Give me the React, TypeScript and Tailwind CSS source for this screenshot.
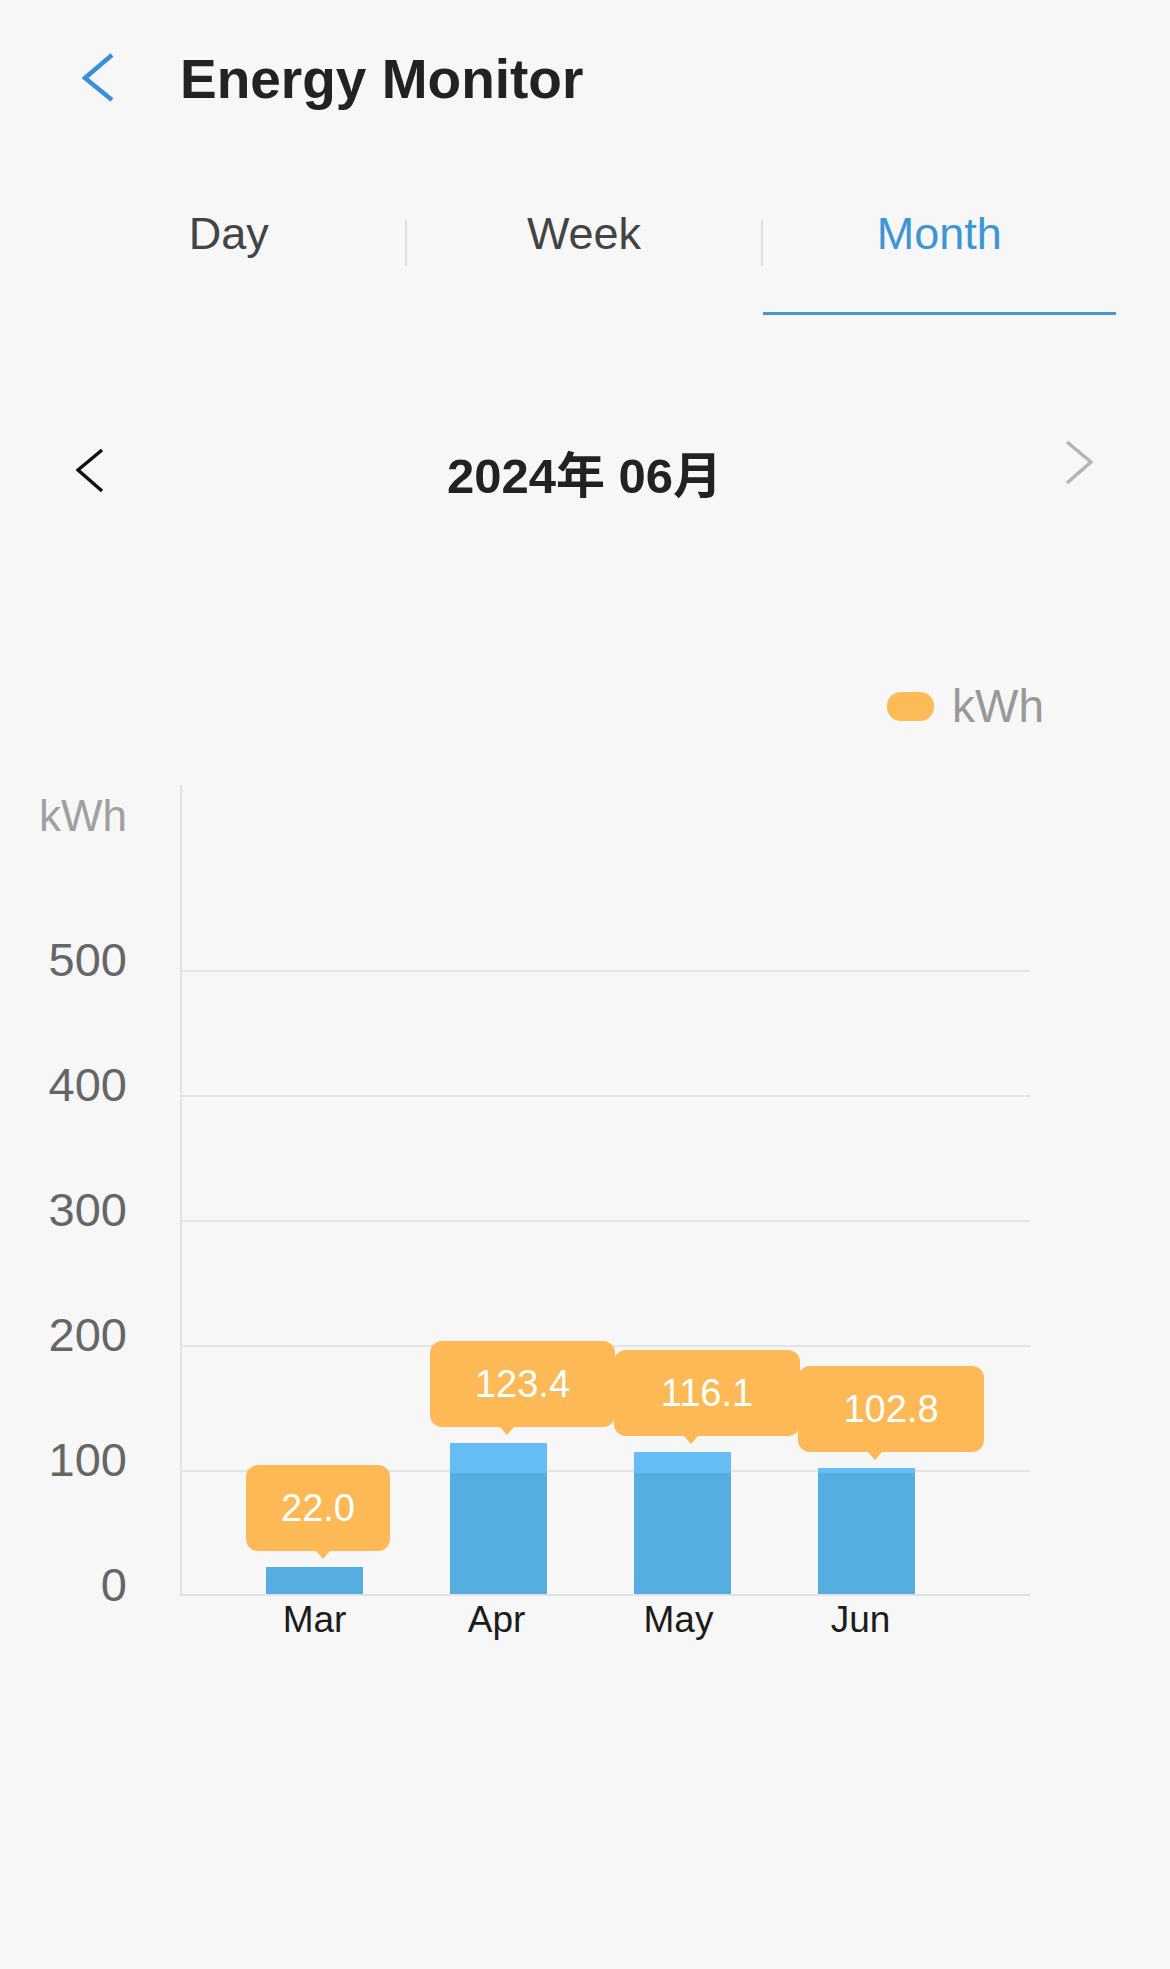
import React from 'react';

const BARS = [
  { label: 'Mar', value: 22.0, tip: 'w-[144px]' },
  { label: 'Apr', value: 123.4, tip: 'w-[185px]' },
  { label: 'May', value: 116.1, tip: 'w-[186px]' },
  { label: 'Jun', value: 102.8, tip: 'w-[186px]' },
];

const Y_TICKS = ['500', '400', '300', '200', '100', '0'];
const GRID_TOPS = ['top-[185px]', 'top-[310px]', 'top-[435px]', 'top-[560px]', 'top-[685px]'];

// pixels per kWh on the plot
const SCALE = 1.225;
// everything above this height (px from baseline) is drawn lighter
const LIGHT_FROM = 121;

const Tabs: React.FC = () => {
  const tabs = ['Day', 'Week', 'Month'];
  return (
    <div className="ml-[52px] mt-[104px] flex w-[1064px] items-start">
      {tabs.map((t, i) => (
        <React.Fragment key={t}>
          {i > 0 && <div className="mt-[9px] h-[46px] w-[2px] bg-[#dedede]" />}
          <div className="flex flex-1 flex-col items-center">
            <span
              className={
                t === 'Month'
                  ? 'text-[45px] leading-none text-[#3d95d6]'
                  : 'text-[45px] leading-none text-[#444444]'
              }
            >
              {t}
            </span>
            <div
              className={
                t === 'Month' ? 'mt-[56px] h-[3px] w-full bg-[#4795c9]' : 'mt-[56px] h-[3px] w-full'
              }
            />
          </div>
        </React.Fragment>
      ))}
    </div>
  );
};

const Chart: React.FC = () => {
  return (
    <div className="mt-[56px] flex">
      <div className="flex w-[127px] flex-col items-end">
        <span className="mt-[9px] text-[44px] leading-none text-[#a0a0a0]">kWh</span>
        <div className="mt-[98px] flex flex-col items-end gap-[78px]">
          {Y_TICKS.map((t) => (
            <span key={t} className="text-[47px] leading-none text-[#666666]">
              {t}
            </span>
          ))}
        </div>
      </div>

      <div className="ml-[53px] flex flex-col">
        <div className="relative flex h-[811px] w-[850px] items-end gap-[87px] border-b-2 border-l-2 border-[#e2e2e2] pl-[84px]">
          {GRID_TOPS.map((g) => (
            <div key={g} className={`absolute left-0 right-0 h-[2px] bg-[#e4e4e4] ${g}`} />
          ))}

          {BARS.map((b) => {
            const h = b.value * SCALE;
            const light = Math.max(0, h - LIGHT_FROM);
            return (
              <div
                key={b.label}
                className="relative flex w-[97px] flex-col bg-[#56ade2]"
                style={{ height: h }}
              >
                <div className="w-full bg-[#65bdf4]" style={{ height: light }} />
                <div
                  className={`absolute bottom-full left-[-20px] mb-[16px] flex h-[86px] items-center justify-center rounded-[12px] bg-[#fcb955] ${b.tip}`}
                >
                  <span className="text-[38px] leading-none text-white">{b.value.toFixed(1)}</span>
                  <div className="absolute left-[70px] top-full h-0 w-0 border-x-[7px] border-t-[8px] border-x-transparent border-t-[#fcb955]" />
                </div>
              </div>
            );
          })}
        </div>

        <div className="mt-[5px] flex gap-[85px] pl-[86px]">
          {BARS.map((b) => (
            <span key={b.label} className="w-[97px] text-center text-[37px] leading-none text-[#1c1c1c]">
              {b.label}
            </span>
          ))}
        </div>
      </div>
    </div>
  );
};

export default function App() {
  return (
    <div className="min-h-[1969px] w-full bg-[#f7f7f7] font-['Liberation_Sans','Noto_Sans_CJK_SC',sans-serif]">
      {/* header */}
      <div className="flex items-start pl-[82px] pt-[53px]">
        <svg width="34" height="50" viewBox="0 0 34 50" fill="none">
          <polyline points="30,2 3,25 30,47" stroke="#3a8fd6" strokeWidth="4.5" />
        </svg>
        <h1 className="ml-[64px] mt-[-1px] text-[55px] font-bold leading-none text-[#222222]">Energy Monitor</h1>
      </div>

      <Tabs />

      {/* period selector */}
      <div className="mt-[125px] flex h-[62px] items-start justify-between pl-[76px] pr-[77px]">
        <svg width="28" height="46" viewBox="0 0 28 46" fill="none" className="mt-[8px]">
          <polyline points="26,2 2,22 26,43" stroke="#111111" strokeWidth="3.5" />
        </svg>
        <span className="mt-[12px] flex-1 text-center text-[49px] font-bold leading-none text-[#222222]">
          2024年 06月
        </span>
        <svg width="28" height="46" viewBox="0 0 28 46" fill="none">
          <polyline points="2,2 26,22 2,43" stroke="#b4b4b4" strokeWidth="3.5" />
        </svg>
      </div>

      {/* legend */}
      <div className="mt-[181px] flex h-[46px] items-center justify-end gap-[18px] pr-[126px]">
        <div className="h-[29px] w-[47px] rounded-[14px] bg-[#fcbb56]" />
        <span className="text-[46px] leading-none text-[#999999]">kWh</span>
      </div>

      <Chart />
    </div>
  );
}
